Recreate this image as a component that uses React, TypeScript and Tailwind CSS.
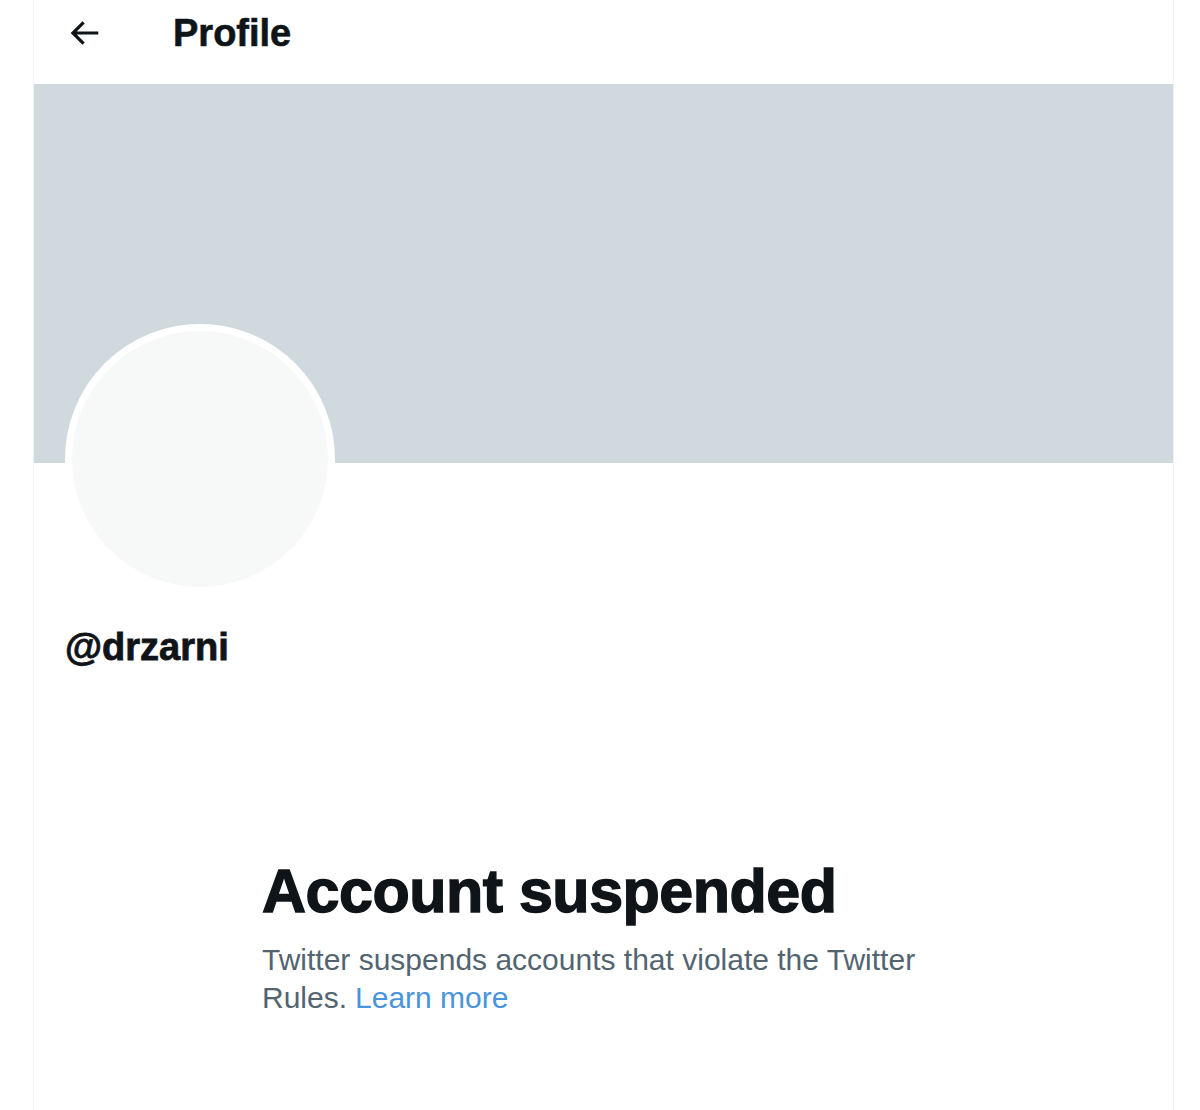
const font = { fontFamily: '"Liberation Sans", Arial, sans-serif' }

function BackArrow() {
  return (
    <svg viewBox="0 0 24 24" width={38} height={38} fill="#0f1419" aria-hidden="true">
      <path d="M7.414 13l5.043 5.04-1.414 1.42L3.586 12l7.457-7.46 1.414 1.42L7.414 11H21v2H7.414z" />
    </svg>
  )
}

export default function App() {
  return (
    <div className="min-h-[1110px] w-[1200px] bg-white text-[#0f1419]" style={font}>
      <div className="ml-[33px] w-[1141px] min-h-[1110px] border-x border-[#eff3f4]">
        {/* Header */}
        <div className="flex h-[84px] items-center pb-[18px]">
          <div className="flex w-[139px] items-center pl-[31px]">
            <BackArrow />
          </div>
          <h1 className="text-[38px] font-bold leading-none [-webkit-text-stroke:0.6px_#0f1419]">Profile</h1>
        </div>

        {/* Banner */}
        <div className="h-[379px] bg-[#cfd9de]" />

        {/* Avatar + handle */}
        <div className="px-[31px]">
          <div className="-mt-[139px] h-[270px] w-[270px] rounded-full border-[7px] border-white bg-[#f7f9f9]" />
          <div className="mt-[29px] text-[38px] font-bold leading-[48px] [-webkit-text-stroke:0.8px_#0f1419]">@drzarni</div>
        </div>

        {/* Suspended notice */}
        <div className="mt-[184px] pl-[228px]">
          <h2 className="text-[61px] font-bold leading-[72px] tracking-[-0.5px] [-webkit-text-stroke:1.4px_#0f1419]">Account suspended</h2>
          <div className="mt-[14px] text-[30px] leading-[38px] text-[#536471]">
            <div>Twitter suspends accounts that violate the Twitter</div>
            <div className="flex gap-[8px]">
              <span>Rules.</span>
              <span className="text-[#4a94dc]">Learn more</span>
            </div>
          </div>
        </div>
      </div>
    </div>
  )
}
